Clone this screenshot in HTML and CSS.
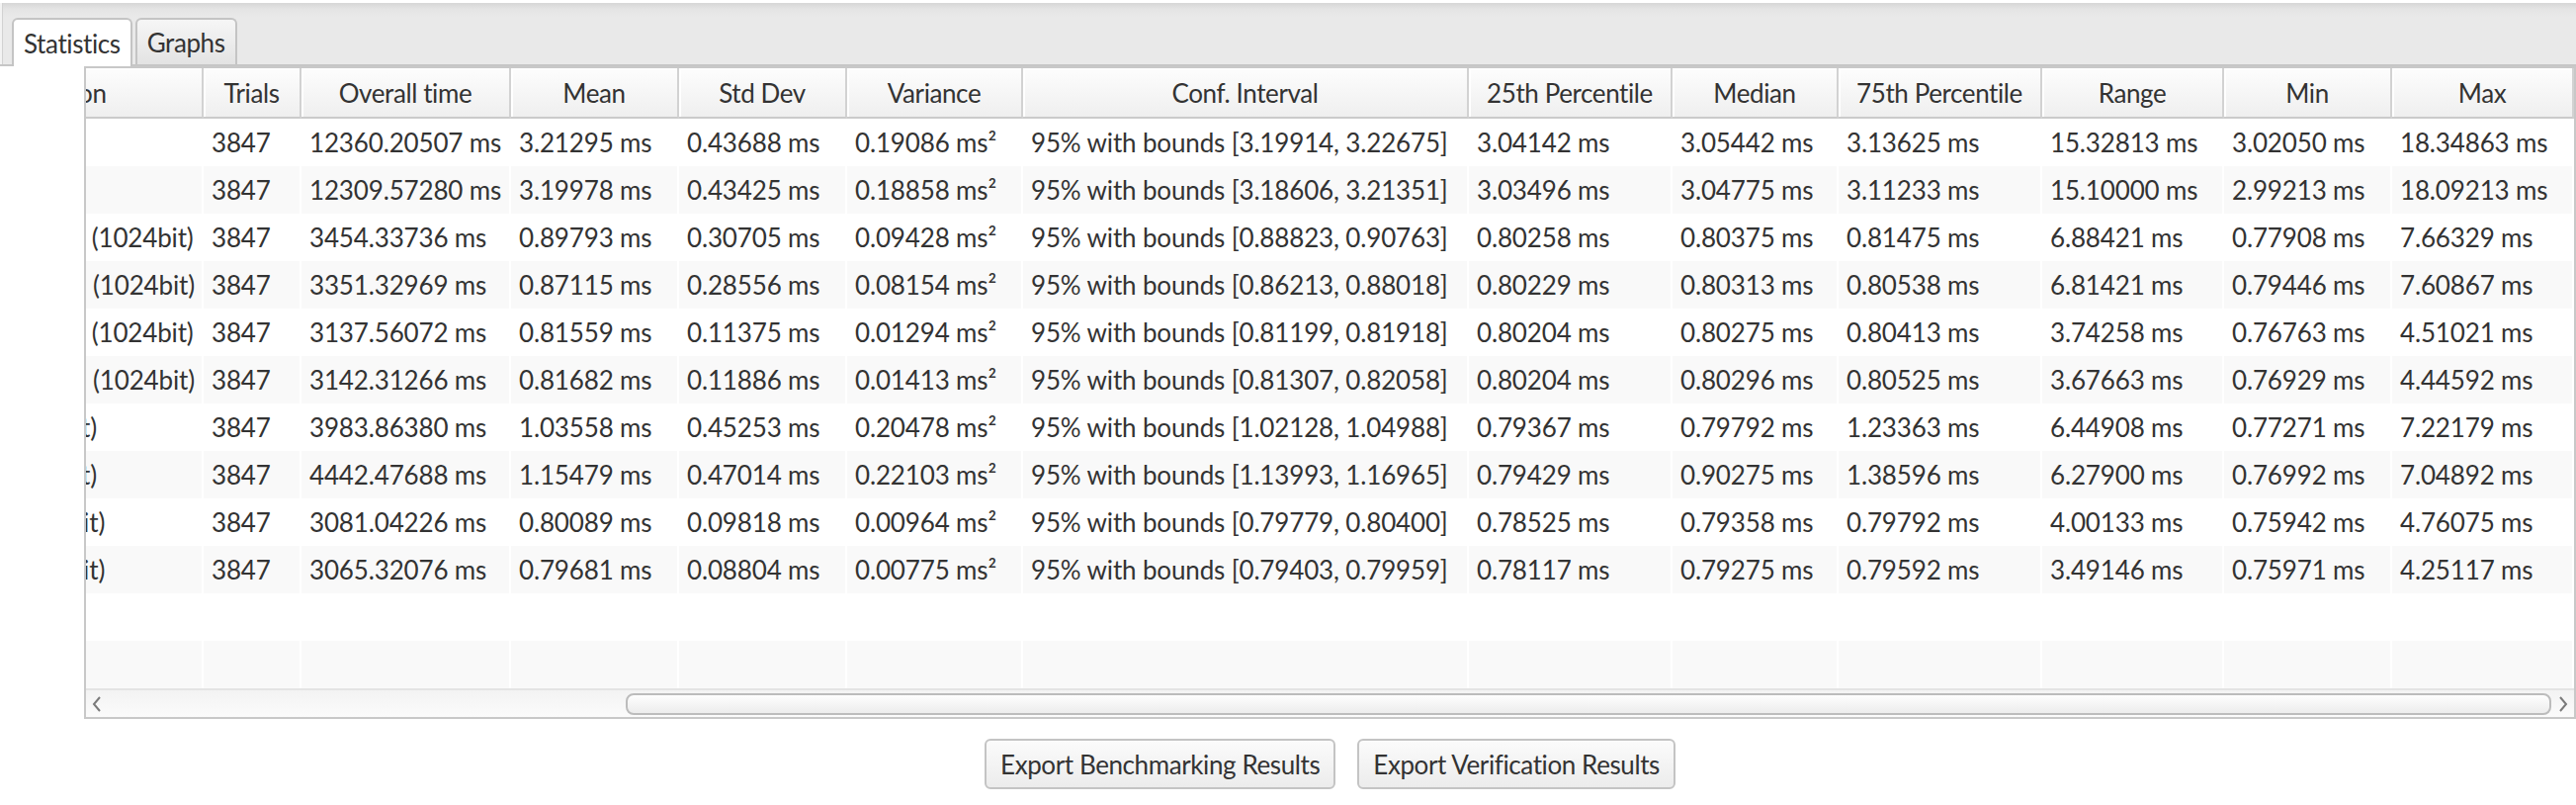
FILE: index.html
```html
<!DOCTYPE html>
<html lang="en">
<head>
<meta charset="utf-8">
<title>Benchmark Statistics</title>
<link rel="stylesheet" href="styles.css">
</head>
<body>
<div class="app">
  <div class="tabbar">
    <div class="tab active">Statistics</div>
    <div class="tab">Graphs</div>
  </div>
  <div class="content">
    <div class="side"></div>
    <div class="main">
      <div class="table">
        <div class="viewport">
          <div class="hrow">
            <div class="h">Operation</div>
            <div class="h">Trials</div>
            <div class="h">Overall time</div>
            <div class="h">Mean</div>
            <div class="h">Std Dev</div>
            <div class="h">Variance</div>
            <div class="h">Conf. Interval</div>
            <div class="h">25th Percentile</div>
            <div class="h">Median</div>
            <div class="h">75th Percentile</div>
            <div class="h">Range</div>
            <div class="h">Min</div>
            <div class="h">Max</div>
          </div>
          <div class="row">
            <div class="c">RSA KeyGen</div><div class="c">3847</div><div class="c">12360.20507 ms</div><div class="c">3.21295 ms</div><div class="c">0.43688 ms</div><div class="c">0.19086 ms²</div><div class="c">95% with bounds [3.19914, 3.22675]</div><div class="c">3.04142 ms</div><div class="c">3.05442 ms</div><div class="c">3.13625 ms</div><div class="c">15.32813 ms</div><div class="c">3.02050 ms</div><div class="c">18.34863 ms</div>
          </div>
          <div class="row alt">
            <div class="c">DSA KeyGen</div><div class="c">3847</div><div class="c">12309.57280 ms</div><div class="c">3.19978 ms</div><div class="c">0.43425 ms</div><div class="c">0.18858 ms²</div><div class="c">95% with bounds [3.18606, 3.21351]</div><div class="c">3.03496 ms</div><div class="c">3.04775 ms</div><div class="c">3.11233 ms</div><div class="c">15.10000 ms</div><div class="c">2.99213 ms</div><div class="c">18.09213 ms</div>
          </div>
          <div class="row">
            <div class="c">RSA Decryption (1024bit)</div><div class="c">3847</div><div class="c">3454.33736 ms</div><div class="c">0.89793 ms</div><div class="c">0.30705 ms</div><div class="c">0.09428 ms²</div><div class="c">95% with bounds [0.88823, 0.90763]</div><div class="c">0.80258 ms</div><div class="c">0.80375 ms</div><div class="c">0.81475 ms</div><div class="c">6.88421 ms</div><div class="c">0.77908 ms</div><div class="c">7.66329 ms</div>
          </div>
          <div class="row alt">
            <div class="c">RSA Verification (1024bit)</div><div class="c">3847</div><div class="c">3351.32969 ms</div><div class="c">0.87115 ms</div><div class="c">0.28556 ms</div><div class="c">0.08154 ms²</div><div class="c">95% with bounds [0.86213, 0.88018]</div><div class="c">0.80229 ms</div><div class="c">0.80313 ms</div><div class="c">0.80538 ms</div><div class="c">6.81421 ms</div><div class="c">0.79446 ms</div><div class="c">7.60867 ms</div>
          </div>
          <div class="row">
            <div class="c">RSA Decryption (1024bit)</div><div class="c">3847</div><div class="c">3137.56072 ms</div><div class="c">0.81559 ms</div><div class="c">0.11375 ms</div><div class="c">0.01294 ms²</div><div class="c">95% with bounds [0.81199, 0.81918]</div><div class="c">0.80204 ms</div><div class="c">0.80275 ms</div><div class="c">0.80413 ms</div><div class="c">3.74258 ms</div><div class="c">0.76763 ms</div><div class="c">4.51021 ms</div>
          </div>
          <div class="row alt">
            <div class="c">RSA Verification (1024bit)</div><div class="c">3847</div><div class="c">3142.31266 ms</div><div class="c">0.81682 ms</div><div class="c">0.11886 ms</div><div class="c">0.01413 ms²</div><div class="c">95% with bounds [0.81307, 0.82058]</div><div class="c">0.80204 ms</div><div class="c">0.80296 ms</div><div class="c">0.80525 ms</div><div class="c">3.67663 ms</div><div class="c">0.76929 ms</div><div class="c">4.44592 ms</div>
          </div>
          <div class="row">
            <div class="c">ECDSA (2048bit)</div><div class="c">3847</div><div class="c">3983.86380 ms</div><div class="c">1.03558 ms</div><div class="c">0.45253 ms</div><div class="c">0.20478 ms²</div><div class="c">95% with bounds [1.02128, 1.04988]</div><div class="c">0.79367 ms</div><div class="c">0.79792 ms</div><div class="c">1.23363 ms</div><div class="c">6.44908 ms</div><div class="c">0.77271 ms</div><div class="c">7.22179 ms</div>
          </div>
          <div class="row alt">
            <div class="c">ECDSA (2048bit)</div><div class="c">3847</div><div class="c">4442.47688 ms</div><div class="c">1.15479 ms</div><div class="c">0.47014 ms</div><div class="c">0.22103 ms²</div><div class="c">95% with bounds [1.13993, 1.16965]</div><div class="c">0.79429 ms</div><div class="c">0.90275 ms</div><div class="c">1.38596 ms</div><div class="c">6.27900 ms</div><div class="c">0.76992 ms</div><div class="c">7.04892 ms</div>
          </div>
          <div class="row">
            <div class="c">Pedersen (256bit)</div><div class="c">3847</div><div class="c">3081.04226 ms</div><div class="c">0.80089 ms</div><div class="c">0.09818 ms</div><div class="c">0.00964 ms²</div><div class="c">95% with bounds [0.79779, 0.80400]</div><div class="c">0.78525 ms</div><div class="c">0.79358 ms</div><div class="c">0.79792 ms</div><div class="c">4.00133 ms</div><div class="c">0.75942 ms</div><div class="c">4.76075 ms</div>
          </div>
          <div class="row alt">
            <div class="c">Pedersen (256bit)</div><div class="c">3847</div><div class="c">3065.32076 ms</div><div class="c">0.79681 ms</div><div class="c">0.08804 ms</div><div class="c">0.00775 ms²</div><div class="c">95% with bounds [0.79403, 0.79959]</div><div class="c">0.78117 ms</div><div class="c">0.79275 ms</div><div class="c">0.79592 ms</div><div class="c">3.49146 ms</div><div class="c">0.75971 ms</div><div class="c">4.25117 ms</div>
          </div>
          <div class="row">
            <div class="c"></div><div class="c"></div><div class="c"></div><div class="c"></div><div class="c"></div><div class="c"></div><div class="c"></div><div class="c"></div><div class="c"></div><div class="c"></div><div class="c"></div><div class="c"></div><div class="c"></div>
          </div>
          <div class="row alt">
            <div class="c"></div><div class="c"></div><div class="c"></div><div class="c"></div><div class="c"></div><div class="c"></div><div class="c"></div><div class="c"></div><div class="c"></div><div class="c"></div><div class="c"></div><div class="c"></div><div class="c"></div>
          </div>
        </div>
        <div class="hscroll">
          <div class="arrow">
            <svg width="10" height="16" viewBox="0 0 10 16"><path d="M8 1 L2 8 L8 15" fill="none" stroke="#7a7a7a" stroke-width="2"/></svg>
          </div>
          <div class="track">
            <div class="thumb" style="margin-left: 524px; width: 1948px;"></div>
          </div>
          <div class="arrow">
            <svg width="10" height="16" viewBox="0 0 10 16"><path d="M2 1 L8 8 L2 15" fill="none" stroke="#7a7a7a" stroke-width="2"/></svg>
          </div>
        </div>
      </div>
      <div class="buttons">
        <button class="btn">Export Benchmarking Results</button>
        <button class="btn">Export Verification Results</button>
      </div>
    </div>
  </div>
</div>
<script src="script.js"></script>
</body>
</html>
```

FILE: styles.css
```css
* { box-sizing: border-box; }

html, body {
  margin: 0;
  padding: 0;
  background: #ffffff;
}

body {
  width: 2606px;
  height: 814px;
  overflow: hidden;
  font-family: Lato, "Liberation Sans", sans-serif;
  font-size: 26px;
  color: #333333;
}

.tabbar {
  height: 67px;
  padding: 15px 0 0 12px;
  display: flex;
  align-items: flex-end;
  gap: 3px;
  border-top: 3px solid #ffffff;
  border-bottom: 2px solid #c6c6c6;
  background: linear-gradient(#d6d6d6 0, #e4e4e4 6px, #e9e9e9 14px, #e9e9e9 100%);
  box-shadow: inset 2px 0 0 #f3f3f3, inset 3px 0 0 #d2d2d2;
}

.tab {
  height: 47px;
  padding: 0 10px;
  display: flex;
  align-items: center;
  border: 2px solid #c4c4c4;
  border-bottom: none;
  border-radius: 6px 6px 0 0;
  background: linear-gradient(#f6f6f6, #e3e3e3);
  white-space: nowrap;
  letter-spacing: -0.4px;
}

.tab.active {
  height: 49px;
  margin-bottom: -2px;
  background: #ffffff;
}

.content {
  display: flex;
  height: 747px;
}

.side {
  width: 85px;
  flex: none;
}

.main {
  flex: 1;
  min-width: 0;
  display: flex;
  flex-direction: column;
}

.table {
  height: 660px;
  border: 2px solid #c8c8c8;
  display: flex;
  flex-direction: column;
}

.viewport {
  flex: 1;
  overflow: hidden;
  white-space: nowrap;
}

.hrow, .row {
  display: grid;
  grid-template-columns: 307px 99px 212px 170px 170px 178px 451px 206px 168px 206px 184px 170px 184px;
  width: max-content;
}

.h {
  height: 51px;
  display: flex;
  align-items: center;
  justify-content: center;
  border-right: 2px solid #d2d2d2;
  border-bottom: 2px solid #cbcbcb;
  background: linear-gradient(#fdfdfd, #efefef);
  box-shadow: inset 2px 2px 0 #ffffff;
  overflow: hidden;
  letter-spacing: -0.4px;
}

.row {
  background: #ffffff;
}

.row.alt {
  background: #f9f9f9;
}

.c {
  height: 48px;
  padding-left: 8px;
  display: flex;
  align-items: center;
  overflow: hidden;
  border-right: 2px solid transparent;
  letter-spacing: -0.15px;
}

.row.alt .c {
  border-right-color: #ffffff;
}

.hscroll {
  height: 29px;
  flex: none;
  display: flex;
  align-items: stretch;
  border-top: 2px solid #e4e4e4;
  background: linear-gradient(#f3f3f3, #fbfbfb);
}

.arrow {
  width: 22px;
  flex: none;
  display: flex;
  align-items: center;
  justify-content: center;
}

.track {
  flex: 1;
  display: flex;
  align-items: center;
}

.thumb {
  height: 22px;
  border: 2px solid #bcbcbc;
  border-radius: 8px;
  background: linear-gradient(#fefefe, #ececec);
}

.buttons {
  display: flex;
  justify-content: center;
  gap: 22px;
  padding-top: 20px;
}

.btn {
  height: 51px;
  padding: 0 14px;
  font-family: inherit;
  font-size: 26px;
  color: #333333;
  border: 2px solid #c4c4c4;
  border-radius: 6px;
  background: linear-gradient(#fbfbfb, #ececec);
  letter-spacing: -0.4px;
}
```

FILE: script.js
```js
document.querySelectorAll('.viewport').forEach(function (v) {
  v.scrollLeft = v.scrollWidth;
});
```
